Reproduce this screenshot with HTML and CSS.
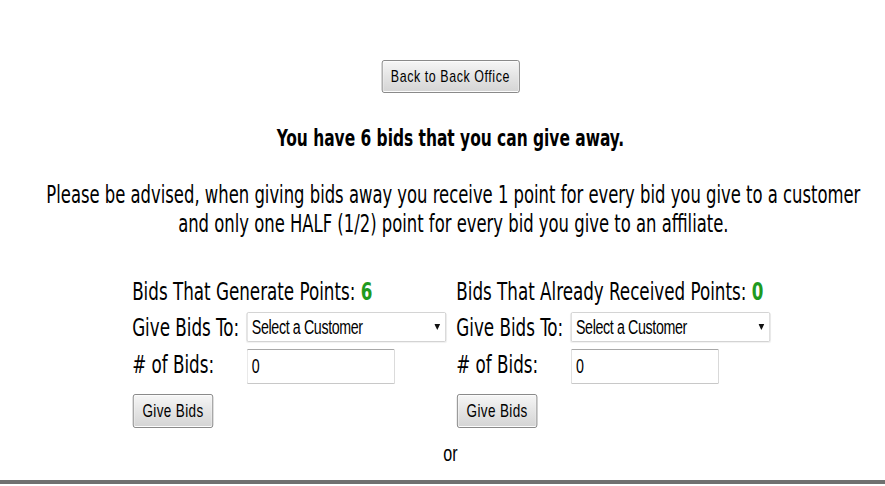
FILE: index.html
```html
<!DOCTYPE html>
<html>
<head>
<meta charset="utf-8">
<link rel="stylesheet" href="styles.css">
</head>
<body>
<div class="page">
  <div class="top">
    <button class="btn btn-back">Back to Back Office</button>
  </div>
  <h1 class="headline">You have 6 bids that you can give away.</h1>
  <p class="notice">Please be advised, when giving bids away you receive 1 point for every bid you give to a customer<br>and only one HALF (1/2) point for every bid you give to an affiliate.</p>
  <div class="forms">
    <div class="col">
      <div class="row-title">Bids That Generate Points: <b class="num">6</b></div>
      <div class="row row-select">
        <span class="label">Give Bids To:</span>
        <div class="select"><span class="select-text">Select a Customer</span><svg class="arrow" width="8" height="6" viewBox="0 0 8 6"><path d="M0 0H8L4 6Z" fill="#111"/></svg></div>
      </div>
      <div class="row row-input">
        <span class="label">#&nbsp;of Bids:</span>
        <div class="input">0</div>
      </div>
      <div class="row row-btn"><button class="btn btn-give">Give Bids</button></div>
    </div>
    <div class="col">
      <div class="row-title">Bids That Already Received Points: <b class="num">0</b></div>
      <div class="row row-select">
        <span class="label">Give Bids To:</span>
        <div class="select"><span class="select-text">Select a Customer</span><svg class="arrow" width="8" height="6" viewBox="0 0 8 6"><path d="M0 0H8L4 6Z" fill="#111"/></svg></div>
      </div>
      <div class="row row-input">
        <span class="label">#&nbsp;of Bids:</span>
        <div class="input">0</div>
      </div>
      <div class="row row-btn"><button class="btn btn-give">Give Bids</button></div>
    </div>
  </div>
  <div class="or">or</div>
</div>
<div class="rule"></div>
</body>
</html>
```
FILE: styles.css
```css
html, body {
  margin: 0;
  padding: 0;
  background: #fff;
  overflow: hidden;
  width: 885px;
  height: 486px;
}
.page {
  box-sizing: border-box;
  width: 1210px;
  padding-left: 24px;
  transform: scaleX(0.73);
  transform-origin: 0 0;
  font-family: "DejaVu Sans Condensed", "DejaVu Sans", sans-serif;
  color: #000;
}
.top {
  padding-top: 60px;
  display: flex;
  justify-content: center;
}
.btn {
  font-family: "Liberation Sans", Arial, sans-serif;
  color: #000;
  background: linear-gradient(#f6f6f6, #e4e4e4 50%, #d4d4d4);
  border: 1px solid #777;
  border-radius: 3px;
  box-shadow: inset 0 0 0 1px #fcfcfc;
  padding: 0;
  margin: 0;
}
.btn-back {
  width: 189px;
  height: 33px;
  font-size: 17px;
  letter-spacing: 0.8px;
}
.headline {
  margin: 33px 0 0;
  text-align: center;
  font-size: 23.5px;
  line-height: 24px;
  font-weight: bold;
}
.notice {
  margin: 30px 0 0;
  padding-left: 8px;
  text-align: center;
  font-size: 25px;
  line-height: 29px;
}
.forms {
  display: flex;
  padding-left: 157px;
  margin-top: 39px;
}
.col {
  width: 444px;
  display: flex;
  flex-direction: column;
}
.row {
  display: flex;
  align-items: center;
  font-size: 25.5px;
  white-space: nowrap;
}
.row-title {
  font-size: 25.5px;
  white-space: nowrap;
  height: 29px;
  line-height: 29px;
}
.num {
  color: #1f9a1f;
  font-weight: bold;
}
.label {
  width: 157px;
  flex: none;
}
.row-select {
  margin-top: 6px;
  height: 30px;
}
.select {
  box-sizing: border-box;
  width: 273px;
  height: 30px;
  border: 1px solid #cdcdcd;
  border-radius: 2px;
  display: flex;
  align-items: center;
  justify-content: space-between;
  padding: 0 7px 0 6px;
  background: #fff;
  box-shadow: 0 1px 1px rgba(0, 0, 0, 0.06);
}
.select-text {
  font-family: "Liberation Sans", Arial, sans-serif;
  font-size: 19.5px;
  letter-spacing: -0.5px;
}
.arrow {
  display: block;
}
.row-input {
  margin-top: 7px;
  height: 35px;
  align-items: flex-start;
}
.row-input .label {
  line-height: 30px;
}
.input {
  box-sizing: border-box;
  width: 203px;
  height: 35px;
  border: 1px solid #c8c8c8;
  border-top-color: #a8a8a8;
  border-radius: 2px;
  font-family: "Liberation Sans", Arial, sans-serif;
  font-size: 19.5px;
  line-height: 33px;
  padding-left: 6px;
}
.row-btn {
  margin-top: 10px;
}
.btn-give {
  width: 110px;
  height: 34px;
  font-size: 18.5px;
  letter-spacing: 0.5px;
  margin-left: 1px;
}
.or {
  margin-top: 14px;
  text-align: center;
  font-family: "Liberation Sans", Arial, sans-serif;
  font-size: 22px;
  line-height: 24px;
}
.rule {
  margin-top: 14px;
  border-top: 4px solid #707070;
}
```
